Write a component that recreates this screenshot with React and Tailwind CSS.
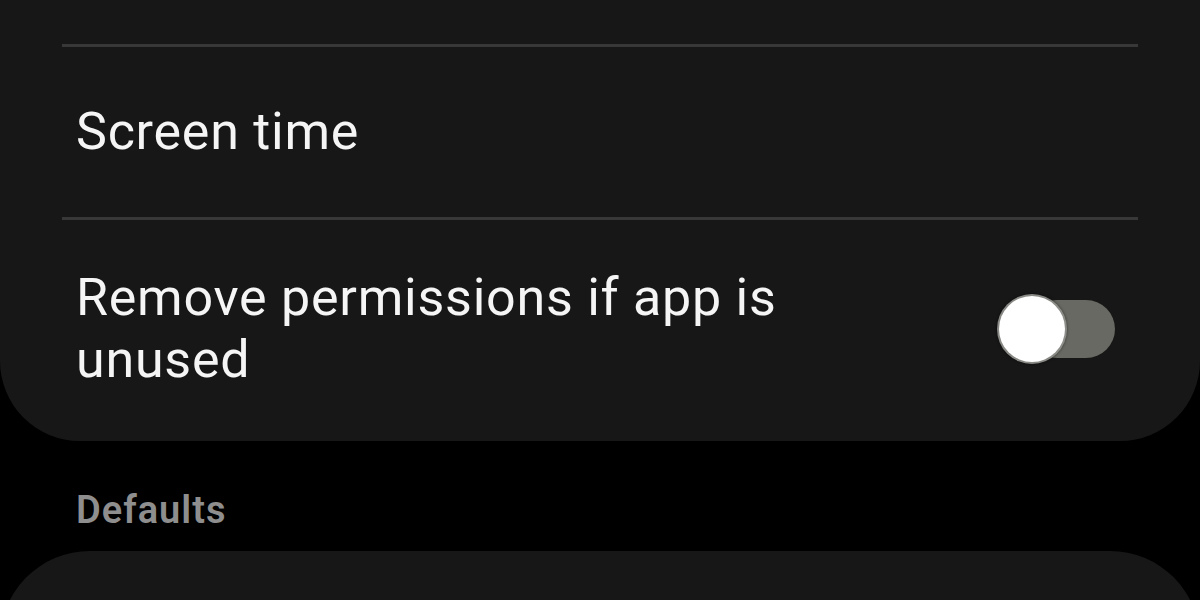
export default function App() {
  return (
    <div className="w-[1200px] h-[600px] overflow-hidden bg-black" style={{ fontFamily: 'Roboto, "Noto Sans", sans-serif' }}>
      <div className="bg-[#171717] rounded-b-[80px]">
        <div className="h-[44px]" />
        <div className="mx-[62px] h-[3px] bg-[#383838]" />
        <div className="h-[170px] flex items-center pl-[76px]">
          <span className="text-[52px] leading-none tracking-[0.75px] text-[#f5f5f5]">Screen time</span>
        </div>
        <div className="mx-[62px] h-[3px] bg-[#383838]" />
        <div className="h-[221px] flex items-center pl-[76px] pr-[85px] pb-[4px]">
          <div className="flex-1 text-[52px] leading-[62px] tracking-[0.75px] text-[#f5f5f5]">
            Remove permissions if app is
            <br />
            unused
          </div>
          <div className="relative w-[117px] h-[68px] flex items-center">
            <div className="absolute left-[30px] right-0 h-[58px] rounded-full bg-[#696963]" />
            <div className="absolute left-[1px] w-[66px] h-[66px] rounded-full bg-white shadow-[0_0_0_2px_rgba(150,150,146,0.9),0_0_3px_2px_rgba(0,0,0,0.5)]" />
          </div>
        </div>
      </div>
      <div className="h-[110px] flex items-center pl-[76px] pt-[28px]">
        <span className="text-[38px] font-semibold tracking-[1px] text-[#8e8e8e]">Defaults</span>
      </div>
      <div className="bg-[#171717] rounded-t-[90px] h-[200px]" />
    </div>
  );
}
